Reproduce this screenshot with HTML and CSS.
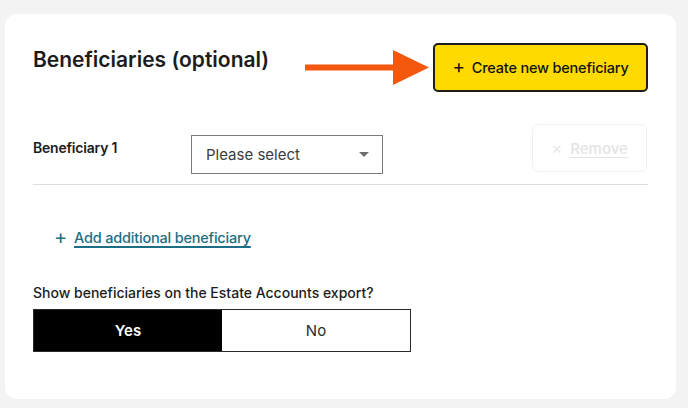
FILE: index.html
```html
<!DOCTYPE html>
<html lang="en">
<head>
<meta charset="utf-8">
<title>Beneficiaries</title>
<link rel="stylesheet" href="styles.css">
</head>
<body>
<div class="card">
  <div class="header">
    <h2 class="title">Beneficiaries (optional)</h2>
    <div class="actions">
      <svg class="arrow" width="124" height="36" viewBox="0 0 124 36" aria-hidden="true">
        <rect x="0" y="14.5" width="90" height="6" fill="#f4580f"/>
        <polygon points="88,0 124,17.5 88,35" fill="#f4580f"/>
      </svg>
      <button class="btn-create"><span class="plus">+</span>Create new beneficiary</button>
    </div>
  </div>

  <div class="row">
    <div class="row-label">Beneficiary 1</div>
    <div class="select">
      <span>Please select</span>
      <span class="caret"></span>
    </div>
    <button class="btn-remove"><span class="x">×</span><span class="u">Remove</span></button>
  </div>

  <a class="add-link" href="#"><span class="plus">+</span><span class="u">Add additional beneficiary</span></a>

  <div class="question">Show beneficiaries on the Estate Accounts export?</div>
  <div class="toggle">
    <div class="opt selected">Yes</div>
    <div class="opt">No</div>
  </div>
</div>
</body>
</html>
```

FILE: styles.css
```css
* { box-sizing: border-box; }
html, body { margin: 0; padding: 0; }
body {
  background: #f4f3f4;
  font-family: Inter, "Liberation Sans", Arial, sans-serif;
  color: #1c1c1c;
  width: 688px;
  height: 408px;
  overflow: hidden;
}
.card {
  margin: 14px 0 0 5px;
  width: 671px;
  height: 385px;
  background: #ffffff;
  border-radius: 12px;
  padding: 29px 28px 0 28px;
}
.header {
  display: flex;
  justify-content: space-between;
  align-items: flex-start;
}
.title {
  margin: 3px 0 0 0;
  font-size: 21px;
  line-height: 28px;
  font-weight: 600;
  letter-spacing: 0;
  color: #1c1c1c;
}
.actions {
  display: flex;
  align-items: center;
  gap: 4px;
}
.arrow { display: block; }
.btn-create {
  width: 215px;
  height: 49px;
  background: #ffda00;
  border: 2px solid #1c1c1c;
  border-radius: 5px;
  font-family: inherit;
  font-size: 14.5px;
  font-weight: 500;
  color: #111;
  display: flex;
  align-items: center;
  justify-content: center;
  padding: 0;
  letter-spacing: -0.2px;
}
.btn-create .plus {
  font-size: 19px;
  font-weight: 400;
  margin-right: 7px;
  line-height: 1;
  position: relative;
  top: -1px;
}
.row {
  margin-top: 32px;
  display: flex;
  align-items: flex-start;
  padding-bottom: 10px;
  border-bottom: 1px solid #dedede;
}
.row-label {
  width: 158px;
  font-size: 14px;
  font-weight: 600;
  line-height: 20px;
  margin-top: 14px;
  letter-spacing: -0.2px;
}
.select {
  margin-top: 11px;
  width: 192px;
  height: 39px;
  border: 1px solid #7a7a7a;
  display: flex;
  align-items: center;
  justify-content: space-between;
  padding: 0 13px 0 14px;
  font-size: 15px;
  color: #3d3d3d;
}
.caret {
  width: 0;
  height: 0;
  border-left: 5px solid transparent;
  border-right: 5px solid transparent;
  border-top: 5px solid #6f6f6f;
}
.btn-remove {
  margin-left: auto;
  margin-right: 1px;
  width: 115px;
  height: 48px;
  background: #fff;
  border: 1px solid #f1f1f1;
  border-radius: 5px;
  font-family: inherit;
  font-size: 15px;
  font-weight: 500;
  color: #e4e4e4;
  display: flex;
  align-items: center;
  justify-content: center;
  padding: 0;
}
.btn-remove .x { margin-right: 8px; font-weight: 300; font-size: 17px; }
.u { text-decoration: underline; text-underline-offset: 3px; text-decoration-thickness: 1px; }
.add-link {
  display: flex;
  align-items: center;
  margin: 43px 0 0 21px;
  font-size: 14.5px;
  font-weight: 500;
  line-height: 20px;
  color: #1b6e84;
  text-decoration: none;
  width: max-content;
  letter-spacing: -0.2px;
}
.add-link .plus {
  font-size: 20px;
  font-weight: 400;
  margin-right: 7px;
  position: relative;
  top: -1px;
}
.add-link .u { text-decoration-thickness: 1.5px; }
.question {
  margin-top: 35px;
  font-size: 14px;
  font-weight: 500;
  line-height: 20px;
  color: #1c1c1c;
  letter-spacing: 0;
}
.toggle {
  margin-top: 6px;
  display: flex;
  width: 378px;
  height: 43px;
  border: 1px solid #2a2a2a;
}
.opt {
  flex: 1;
  display: flex;
  align-items: center;
  justify-content: center;
  font-size: 15px;
  color: #2a2a2a;
}
.opt.selected {
  background: #000;
  color: #fff;
  font-weight: 600;
}
```
